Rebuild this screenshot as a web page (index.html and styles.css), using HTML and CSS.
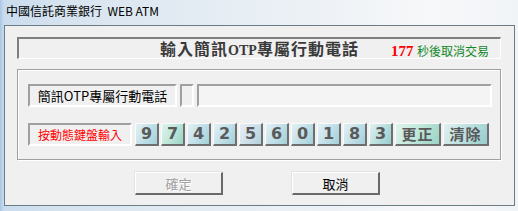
FILE: index.html
```html
<!DOCTYPE html>
<html lang="zh-Hant">
<head>
<meta charset="utf-8">
<title>WEB ATM</title>
<link rel="stylesheet" href="styles.css">
</head>
<body>
<div class="titlebar">中國信託商業銀行&nbsp; WEB ATM</div>
<div class="panel">
  <div class="heading">
    <span class="heading-side"></span>
    <h1 class="heading-text">輸入簡訊<span class="latin">OTP</span>專屬行動電話</h1>
    <div class="countdown"><span class="count">177</span> <span class="count-label">秒後取消交易</span></div>
  </div>
  <div class="group">
    <div class="row">
      <div class="label label-phone">簡訊OTP專屬行動電話</div>
      <div class="field field-small"></div>
      <div class="field field-input"></div>
    </div>
    <div class="row">
      <div class="label label-red">按動態鍵盤輸入</div>
      <div class="keys">
        <button class="key k-blue">9</button>
        <button class="key k-green">7</button>
        <button class="key k-blue">4</button>
        <button class="key k-blue">2</button>
        <button class="key k-pale">5</button>
        <button class="key k-blue">6</button>
        <button class="key k-blue">0</button>
        <button class="key k-blue">1</button>
        <button class="key k-blue">8</button>
        <button class="key k-teal">3</button>
        <button class="key key-wide k-green">更正</button>
        <button class="key key-wide k-teal">清除</button>
      </div>
    </div>
  </div>
  <div class="actions">
    <button class="btn" disabled>確定</button>
    <button class="btn">取消</button>
  </div>
</div>
</body>
</html>
```

FILE: styles.css
```css
* { box-sizing: border-box; }

html, body {
  margin: 0;
  padding: 0;
}

body {
  width: 518px;
  height: 211px;
  overflow: hidden;
  font-family: "Noto Sans CJK TC", "Noto Sans", sans-serif;
  background:
    linear-gradient(to right, #a9c7e4 0px, #c9dcee 4px, #d6e3ef 60px, #e4ecf3 200px, #eef2f6 330px, #f7f8fa 430px, #f1f4f7 518px);
}

.titlebar {
  height: 25px;
  padding-left: 6px;
  font-size: 12px;
  line-height: 22px;
  color: #000;
  white-space: pre;
}

.panel {
  margin-left: 4px;
  width: 511px;
  height: 181px;
  border: 1px solid #6b7c86;
  background: #f0f0f0;
  padding: 11px 13px 0 12px;
}

.heading {
  display: grid;
  grid-template-columns: 1fr auto 1fr;
  align-items: center;
  height: 22px;
  border-style: solid;
  border-width: 2px 1px 1px 2px;
  border-color: #7f7f7f #ffffff #ffffff #7f7f7f;
}

.heading-text {
  margin: 0;
  font-family: "Noto Sans CJK TC", serif;
  font-size: 16px;
  font-weight: bold;
  letter-spacing: 1px;
  color: #3a3a3a;
  line-height: 18px;
}

.latin {
  font-family: "Liberation Serif", serif;
  font-size: 14px;
  letter-spacing: 0;
}

.countdown {
  justify-self: end;
  padding-right: 11px;
  white-space: nowrap;
  line-height: 18px;
}

.count {
  font-family: "Liberation Serif", serif;
  font-weight: bold;
  font-size: 15px;
  color: #ff0000;
}

.count-label {
  font-size: 12px;
  color: #108a28;
}

.group {
  margin-top: 10px;
  height: 91px;
  border: 1px solid #a0a0a0;
  box-shadow: inset 1px 1px 0 #ffffff, 1px 1px 0 #ffffff;
  padding: 14px 0 0 10px;
  display: flex;
  flex-direction: column;
  gap: 16px;
}

.row {
  display: flex;
  gap: 3px;
  height: 23px;
}

.label {
  height: 23px;
  border-style: solid;
  border-width: 2px;
  border-color: #a0a0a0 #ffffff #ffffff #a0a0a0;
  display: flex;
  align-items: center;
  justify-content: center;
  font-size: 13px;
  color: #000;
  white-space: nowrap;
}

.label-phone { width: 149px; }

.label-red {
  width: 104px;
  font-size: 12px;
  color: #ff0000;
}

.field {
  height: 23px;
  border-style: solid;
  border-width: 2px;
  border-color: #a0a0a0 #ffffff #ffffff #a0a0a0;
}

.field-small { width: 14px; }

.field-input {
  width: 295px;
  background: #f4f4f4;
}

.keys {
  display: flex;
  gap: 2px;
}

.key {
  width: 24px;
  height: 23px;
  padding: 0;
  border-style: solid;
  border-width: 1px 2px 2px 1px;
  border-color: #fafafa #6f6f6f #6f6f6f #fafafa;
  font-family: "DejaVu Sans", sans-serif;
  font-weight: bold;
  font-size: 16px;
  line-height: 18px;
  color: #5a5a5a;
  cursor: pointer;
}

.key-wide {
  width: 46px;
  font-family: "Noto Sans CJK TC", sans-serif;
  font-size: 15px;
  letter-spacing: 1px;
}

.k-blue { background: linear-gradient(120deg, #e2f0f6 0%, #c6e2ea 45%, #a4d0d8 100%); }
.k-green { background: linear-gradient(120deg, #def4ec 0%, #c2e8dc 45%, #9ad4c4 100%); }
.k-pale { background: linear-gradient(120deg, #e8eef6 0%, #d2e2ec 45%, #b2d2dc 100%); }
.k-teal { background: linear-gradient(120deg, #e0f0f0 0%, #c0e2e2 45%, #98cccc 100%); }

.actions {
  display: flex;
  gap: 69px;
  margin-top: 12px;
  padding-left: 118px;
}

.btn {
  width: 88px;
  height: 23px;
  padding: 0;
  background: #f0f0f0;
  border-style: solid;
  border-width: 1px 2px 2px 1px;
  border-color: #ffffff #696969 #696969 #ffffff;
  box-shadow: -1px -1px 0 #e3e3e3;
  font-family: "Noto Sans CJK TC", sans-serif;
  font-size: 13px;
  color: #000;
}

.btn:disabled {
  color: #a0a0a0;
  text-shadow: 1px 1px 0 #ffffff;
}
```
